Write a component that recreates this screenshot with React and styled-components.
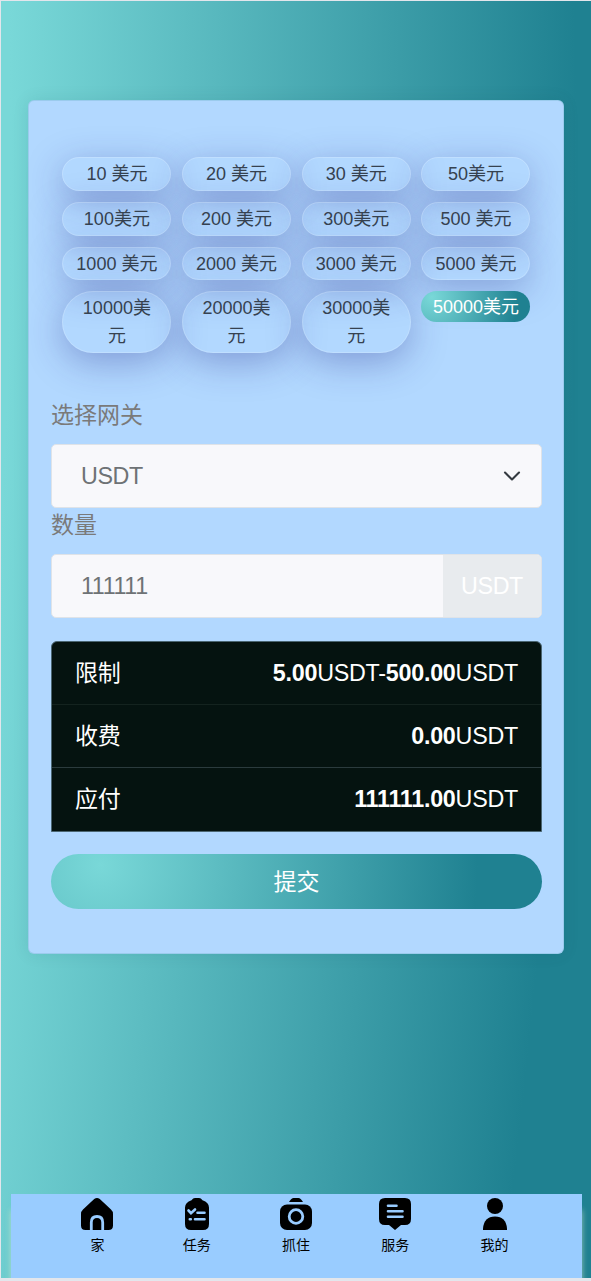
import React from 'react';
import styled, { createGlobalStyle, css } from 'styled-components';

const light = '#79d8d8';
const deep = '#1f8191';
const gradient = `radial-gradient(circle at 10% 20%, ${light} 0%, ${deep} 85%)`;

const GlobalStyle = createGlobalStyle`
  * { box-sizing: border-box; }
  body {
    margin: 0;
    font-family: "Liberation Sans", "Noto Sans CJK SC", sans-serif;
    background: #e3e6ec;
  }
  button, input { font: inherit; }
`;

const Page = styled.div`
  display: flex;
  flex-direction: column;
  width: 591px;
  height: 1281px;
  border: solid #e3e6ec;
  border-width: 1px 0 3px 1px;
  padding: 99px 10px 0;
  background: radial-gradient(circle 8575px at -8000px 150px, ${light} 93.4%, ${deep} 100%);
  overflow: hidden;
`;

const Card = styled.main`
  width: 536px;
  height: 854px;
  margin-left: 17px;
  padding: 56px 21px 0 22px;
  border: 1px solid rgba(140, 195, 225, 0.6);
  border-radius: 6px;
  background: #b2d8ff;
  box-shadow: 0 0 16px rgba(0, 70, 80, 0.1);
`;

const Amounts = styled.div`
  display: grid;
  grid-template-columns: repeat(4, 109px);
  grid-template-rows: 34px 34px 33px 62px;
  gap: 11px 10.7px;
  margin-left: 11.4px;
  align-items: start;
`;

const Pill = styled.button`
  height: 100%;
  padding: 2px 12px;
  border: 1px solid rgba(255, 255, 255, 0.18);
  border-radius: 31px;
  background: transparent;
  color: #364250;
  font-size: 18px;
  line-height: 28px;
  box-shadow: 0 9px 36px rgba(31, 38, 135, 0.34);
  ${(p) => p.$selected && css`
    height: 31px;
    padding: 0;
    border: 0;
    background: ${gradient};
    color: #fff;
    box-shadow: none;
  `}
`;

const Label = styled.label`
  display: block;
  height: ${(p) => p.$height}px;
  padding-top: ${(p) => p.$top}px;
  color: #7a7a7a;
  font-size: 23px;
  line-height: 34px;
`;

const Field = styled.div`
  display: flex;
  align-items: center;
  justify-content: space-between;
  width: 491px;
  height: 64px;
  border: 1px solid #dfe3e8;
  border-radius: 5px;
  background: #f8f8fb;
  color: #6e7275;
  font-size: 23.3px;
  letter-spacing: -0.4px;
  padding-left: 29px;
  overflow: hidden;
`;

const Chevron = styled.svg`
  margin-right: 20px;
`;

const Suffix = styled.span`
  display: flex;
  align-items: center;
  justify-content: center;
  width: 98px;
  height: 100%;
  background: #e8ebee;
  color: #fff;
`;

const Summary = styled.dl`
  width: 491px;
  margin: 23px 0 22px;
  border: 1px solid #4b6672;
  border-radius: 6px 6px 0 0;
  background: #051310;
  color: #fff;
  font-size: 23.3px;
  letter-spacing: -0.25px;
`;

const SummaryRow = styled.div`
  display: flex;
  justify-content: space-between;
  align-items: center;
  height: 63px;
  padding: 0 23px ${(p) => (p.$divider ? 1 : 2)}px;
  border-bottom: ${(p) => (p.$divider ? `1px solid ${p.$divider}` : 0)};
  dt, dd { margin: 0; line-height: 34px; }
  dt { font-size: 23px; }
`;

const Submit = styled.button`
  display: block;
  width: 491px;
  height: 55px;
  padding: 0 0 4px;
  border: 0;
  border-radius: 28px;
  background: ${gradient};
  color: #fff;
  font-size: 23px;
`;

const TabBar = styled.nav`
  display: flex;
  justify-content: center;
  width: 571px;
  height: 84px;
  margin-top: auto;
  padding: 4px 1px 0 0;
  background: #99ccff;
  box-shadow: 0 16px 6px rgba(214, 230, 205, 0.65);
`;

const Tab = styled.a`
  display: flex;
  flex-direction: column;
  align-items: center;
  width: 99.3px;
  color: #000;
  font-size: 14px;
  line-height: 20px;
  svg { display: block; margin-bottom: 5px; }
`;

const Icon = ({ children }) => (
  <svg width="32" height="32" viewBox="0 0 32 32" fill="#000">{children}</svg>
);

const amounts = [
  '10 美元', '20 美元', '30 美元', '50美元',
  '100美元', '200 美元', '300美元', '500 美元',
  '1000 美元', '2000 美元', '3000 美元', '5000 美元',
  '10000美元', '20000美元', '30000美元', '50000美元',
];

const tabs = [
  ['家', (
    <>
      <path d="M13.2 1.1Q16-.9 18.8 1.1L30 11.5Q32 13.3 32 16V27.5Q32 32 27.5 32H4.5Q0 32 0 27.5V16Q0 13.3 2 11.5Z" />
      <path d="M10.3 32V24.5Q10.3 18.5 16 18.5T21.7 24.5V32" fill="none" stroke="#99ccff" strokeWidth="2.8" />
    </>
  )],
  ['任务', (
    <>
      <path d="M10.5 2.2Q12 0 14 0H18Q20 0 21.5 2.2Q28 4.4 28 9.5V26Q28 32 22 32H10Q4 32 4 26V9.5Q4 4.4 10.5 2.2Z" />
      <path d="M7.5 12.5L10 15.2L14 11.5M16.5 14.8H23.5M8.8 21.3H9.8M14 21.3H23.5" fill="none" stroke="#99ccff" strokeWidth="2.6" strokeLinecap="round" />
    </>
  )],
  ['抓住', (
    <>
      <path d="M9 4Q11.5 0 13.5 0H18.5Q20.5 0 23 4Z" />
      <rect y="6.5" width="32" height="25.5" rx="7" />
      <circle cx="16" cy="18.5" r="6.8" fill="none" stroke="#99ccff" strokeWidth="2.8" />
    </>
  )],
  ['服务', (
    <>
      <path d="M6 0H26Q32 0 32 6V21Q32 27 26 27H22L16 32L10 27H6Q0 27 0 21V6Q0 0 6 0Z" />
      <path d="M9 7.8H17.5M9 13.3H23.5M9 18.8H23.5" stroke="#99ccff" strokeWidth="2.6" strokeLinecap="round" />
    </>
  )],
  ['我的', (
    <>
      <circle cx="16" cy="8" r="8" />
      <path d="M4 32V30.5Q5 18.5 16 18.5T28 30.5V32Z" />
    </>
  )],
];

export default function App() {
  return (
    <>
      <GlobalStyle />
      <Page>
        <Card>
          <Amounts>
            {amounts.map((a) => (
              <Pill key={a} $selected={a === '50000美元'}>{a}</Pill>
            ))}
          </Amounts>
          <Label $height={91} $top={45}>选择网关</Label>
          <Field>
            <span>USDT</span>
            <Chevron width="18" height="18" viewBox="0 0 18 18" fill="none" stroke="#343a40" strokeWidth="2.1" strokeLinecap="round" strokeLinejoin="round">
              <path d="M2 5.5L9 12.5L16 5.5" />
            </Chevron>
          </Field>
          <Label $height={46} $top={0}>数量</Label>
          <Field>
            <span>111111</span>
            <Suffix>USDT</Suffix>
          </Field>
          <Summary>
            <SummaryRow $divider="#14231f">
              <dt>限制</dt>
              <dd><b>5.00</b>USDT-<b>500.00</b>USDT</dd>
            </SummaryRow>
            <SummaryRow $divider="#2b3b3d">
              <dt>收费</dt>
              <dd><b>0.00</b>USDT</dd>
            </SummaryRow>
            <SummaryRow>
              <dt>应付</dt>
              <dd><b>111111.00</b>USDT</dd>
            </SummaryRow>
          </Summary>
          <Submit>提交</Submit>
        </Card>
        <TabBar>
          {tabs.map(([name, drawing]) => (
            <Tab key={name}>
              <Icon>{drawing}</Icon>
              {name}
            </Tab>
          ))}
        </TabBar>
      </Page>
    </>
  );
}
